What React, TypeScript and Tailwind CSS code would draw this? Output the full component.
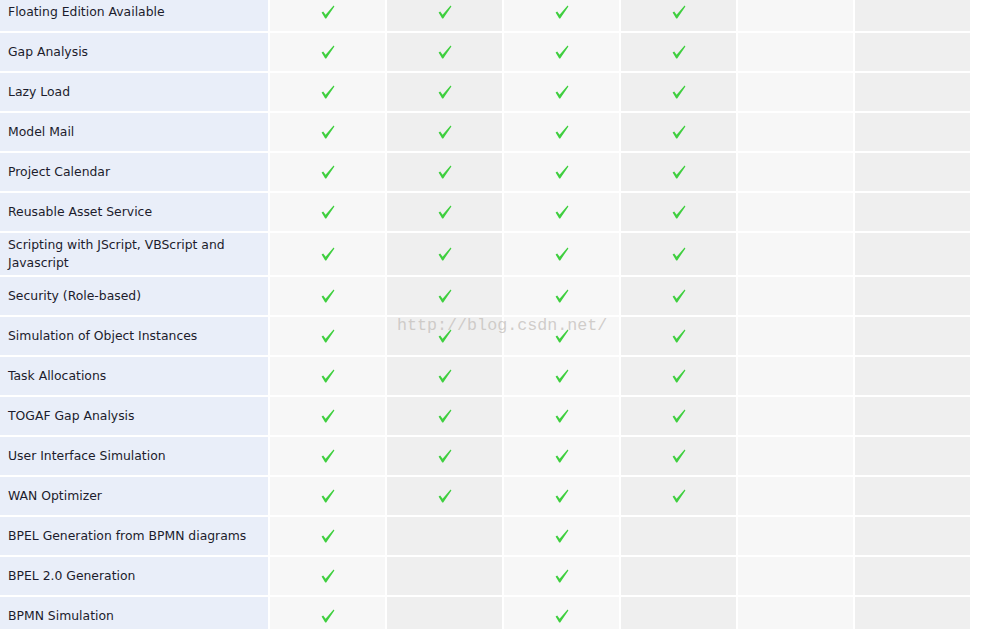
const rows: { label: string; checks: boolean[] }[] = [
  { label: 'Floating Edition Available', checks: [true, true, true, true, false, false] },
  { label: 'Gap Analysis', checks: [true, true, true, true, false, false] },
  { label: 'Lazy Load', checks: [true, true, true, true, false, false] },
  { label: 'Model Mail', checks: [true, true, true, true, false, false] },
  { label: 'Project Calendar', checks: [true, true, true, true, false, false] },
  { label: 'Reusable Asset Service', checks: [true, true, true, true, false, false] },
  { label: 'Scripting with JScript, VBScript and\nJavascript', checks: [true, true, true, true, false, false] },
  { label: 'Security (Role-based)', checks: [true, true, true, true, false, false] },
  { label: 'Simulation of Object Instances', checks: [true, true, true, true, false, false] },
  { label: 'Task Allocations', checks: [true, true, true, true, false, false] },
  { label: 'TOGAF Gap Analysis', checks: [true, true, true, true, false, false] },
  { label: 'User Interface Simulation', checks: [true, true, true, true, false, false] },
  { label: 'WAN Optimizer', checks: [true, true, true, true, false, false] },
  { label: 'BPEL Generation from BPMN diagrams', checks: [true, false, true, false, false, false] },
  { label: 'BPEL 2.0 Generation', checks: [true, false, true, false, false, false] },
  { label: 'BPMN Simulation', checks: [true, false, true, false, false, false] },
]

function Tick() {
  return (
    <svg width="14" height="14" viewBox="0 0 14 14" aria-hidden="true">
      <path d="M0.6 7.4 L2.2 6.4 L4.6 9.8 L12.6 0.6 L13.4 1.4 L5.2 13.4 L4.2 13.4 Z" fill="#3fcf3f" />
    </svg>
  )
}

export default function App() {
  return (
    <div className="relative min-h-[629px] bg-white overflow-hidden" style={{ fontFamily: '"DejaVu Sans", Verdana, sans-serif' }}>
      <div className="mt-[-7px] grid w-[970px] grid-cols-[268px_repeat(6,115px)] gap-[2px]">
        {rows.map((r) => (
          <div key={r.label} className="contents">
            <div className="flex min-h-[38px] items-center bg-[#e9eef9] py-[3px] pl-2 pr-2 text-[12.4px] leading-[18px] text-[#1c1c2c] whitespace-pre-line">
              {r.label}
            </div>
            {r.checks.map((c, i) => (
              <div
                key={i}
                className={`flex min-h-[38px] items-center justify-center ${i % 2 === 0 ? 'bg-[#f7f7f7]' : 'bg-[#efefef]'}`}
              >
                {c && <Tick />}
              </div>
            ))}
          </div>
        ))}
      </div>

      {/* blog watermark */}
      <div
        className="pointer-events-none absolute left-[397px] top-[316px] text-[16.7px] leading-[20px] text-[#c6c2be]/80 select-none"
        style={{ fontFamily: '"Liberation Mono", monospace' }}
      >
        http://blog.csdn.net/
      </div>
    </div>
  )
}
